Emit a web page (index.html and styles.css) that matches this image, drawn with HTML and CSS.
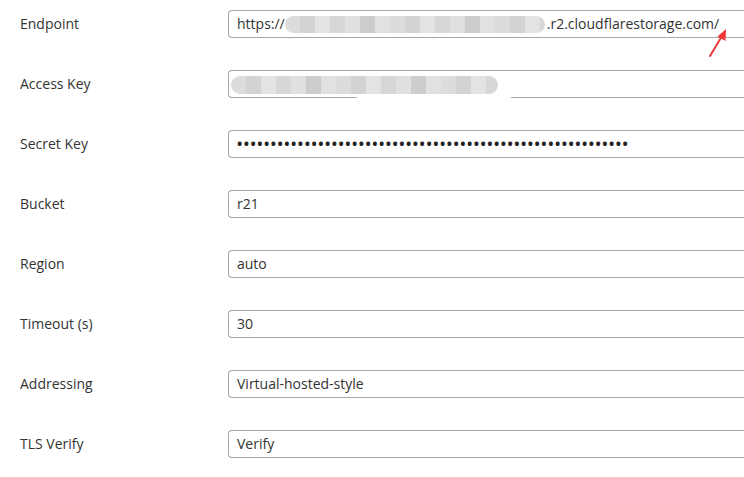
FILE: index.html
```html
<!DOCTYPE html>
<html>
<head>
<meta charset="utf-8">
<link rel="stylesheet" href="styles.css">
</head>
<body>
<div class="form">
  <div class="row">
    <div class="label">Endpoint</div>
    <div class="field">https://<span class="mask mask-endpoint"></span>.r2.cloudflarestorage.com/</div>
  </div>
  <div class="row">
    <div class="label">Access Key</div>
    <div class="field field-access"><span class="mask mask-access"></span><span class="gap-line"></span></div>
  </div>
  <div class="row">
    <div class="label">Secret Key</div>
    <div class="field pwd">••••••••••••••••••••••••••••••••••••••••••••••••••••••••••</div>
  </div>
  <div class="row">
    <div class="label">Bucket</div>
    <div class="field">r21</div>
  </div>
  <div class="row">
    <div class="label">Region</div>
    <div class="field">auto</div>
  </div>
  <div class="row">
    <div class="label">Timeout (s)</div>
    <div class="field">30</div>
  </div>
  <div class="row">
    <div class="label">Addressing</div>
    <div class="field">Virtual-hosted-style</div>
  </div>
  <div class="row">
    <div class="label">TLS Verify</div>
    <div class="field">Verify</div>
  </div>
</div>
<svg class="arrow" width="30" height="34" viewBox="0 0 30 34">
  <line x1="4" y1="30" x2="16" y2="10" stroke="#f0383a" stroke-width="2" stroke-linecap="round"/>
  <polygon points="20,3 19.5,15 11.5,10.5" fill="#f0383a"/>
</svg>
</body>
</html>
```
FILE: styles.css
```css
html, body {
  margin: 0;
  padding: 0;
  background: #fff;
  overflow: hidden;
}
body {
  width: 744px;
  height: 477px;
  position: relative;
  font-family: "Open Sans", "Noto Sans", sans-serif;
  font-size: 14px;
  color: #333;
}
.form {
  display: flex;
  flex-direction: column;
  gap: 32px;
  padding: 10px 0 0 20px;
}
.row {
  display: grid;
  grid-template-columns: 208px 1fr;
  align-items: center;
  height: 28px;
}
.label {
  color: #333;
  line-height: 28px;
}
.field {
  box-sizing: border-box;
  height: 28px;
  border: 1px solid #a6a6a6;
  border-right: 0;
  border-radius: 4px 0 0 4px;
  padding: 0 8px;
  line-height: 26px;
  white-space: nowrap;
  overflow: hidden;
  display: flex;
  align-items: center;
  position: relative;
  color: #333;
}
.pwd {
  font-size: 14px;
  font-weight: 700;
  letter-spacing: 1.5px;
  color: #222;
}
.mask {
  display: inline-block;
  flex: none;
  height: 17px;
  border-radius: 9px;
  filter: blur(0.6px);
  background: repeating-linear-gradient(90deg,
    #dcdcdc 0 15px, #d3d3d3 15px 30px, #e3e3e3 30px 45px, #d7d7d7 45px 60px,
    #e0e0e0 60px 75px, #cdcdcd 75px 90px, #e1e1e1 90px 105px);
}
.mask-endpoint {
  width: 260px;
  margin: 1px 2px 0 0;
}
.field-access {
  padding-left: 2px;
  overflow: visible;
}
.mask-access {
  width: 267px;
  height: 18px;
  margin-top: 2px;
}
.gap-line {
  position: absolute;
  left: 128px;
  bottom: -2px;
  width: 154px;
  height: 3px;
  background: #fff;
}
.arrow {
  position: absolute;
  left: 706px;
  top: 26px;
}
```
